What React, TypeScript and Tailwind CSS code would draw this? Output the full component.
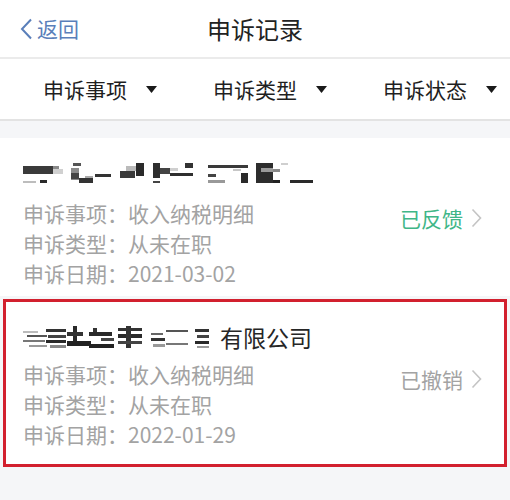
import React from "react";

type Bar = [number, number, number, number, string];

// pixelated (mosaic) names, x/y relative to each svg
const mosaicOne: Bar[] = [
  [0, 5, 30, 8, "#3a3a3a"],
  [30, 5, 6, 3, "#8a8a8a"],
  [30, 8, 10, 5, "#d0d0d0"],
  [0, 20, 13, 2, "#bdbdbd"],
  [17, 19, 7, 3, "#2a2a2a"],
  [50, 2, 8, 3, "#555"],
  [48, 7, 8, 12, "#8a8a8a"],
  [48, 12, 8, 6, "#444"],
  [56, 17, 14, 5, "#333"],
  [62, 15, 8, 2, "#aaa"],
  [72, 13, 16, 3, "#333"],
  [97, 10, 15, 7, "#3a3a3a"],
  [103, 5, 10, 5, "#bbb"],
  [113, 2, 8, 13, "#2a2a2a"],
  [130, 2, 7, 15, "#2e2e2e"],
  [137, 7, 10, 6, "#444"],
  [147, 12, 23, 3, "#2f2f2f"],
  [162, 2, 8, 5, "#333"],
  [147, 7, 8, 3, "#cfcfcf"],
  [130, 20, 7, 2, "#444"],
  [185, 4, 40, 3, "#3a3a3a"],
  [185, 13, 8, 3, "#444"],
  [210, 8, 8, 2, "#c7c7c7"],
  [218, 12, 7, 10, "#2a2a2a"],
  [185, 19, 17, 3, "#999"],
  [233, 2, 17, 20, "#2d2d2d"],
  [238, 7, 12, 4, "#9a9a9a"],
  [250, 8, 7, 3, "#8a8a8a"],
  [250, 19, 7, 3, "#222"],
  [258, 2, 7, 2, "#cfcfcf"],
  [267, 19, 23, 3, "#2a2a2a"],
];

const mosaicTwo: Bar[] = [
  [0, 5, 15, 2, "#bbb"],
  [4, 9, 20, 2, "#555"],
  [0, 14, 22, 2, "#777"],
  [6, 19, 18, 2, "#9a9a9a"],
  [23, 3, 20, 3, "#333"],
  [25, 9, 18, 3, "#444"],
  [23, 14, 20, 3, "#2a2a2a"],
  [27, 19, 16, 3, "#888"],
  [50, 0, 4, 19, "#2a2a2a"],
  [44, 6, 16, 4, "#333"],
  [44, 15, 24, 5, "#222"],
  [70, 2, 4, 8, "#333"],
  [66, 6, 23, 4, "#2a2a2a"],
  [78, 12, 13, 3, "#444"],
  [66, 18, 25, 4, "#222"],
  [95, 2, 24, 3, "#333"],
  [95, 8, 24, 4, "#2a2a2a"],
  [103, 0, 5, 22, "#333"],
  [95, 15, 24, 3, "#444"],
  [128, 7, 12, 2, "#666"],
  [128, 12, 14, 3, "#333"],
  [130, 18, 12, 3, "#999"],
  [143, 4, 22, 2, "#555"],
  [143, 17, 22, 2, "#777"],
  [172, 3, 14, 3, "#333"],
  [174, 9, 12, 3, "#444"],
  [172, 15, 14, 3, "#2a2a2a"],
  [174, 20, 12, 2, "#999"],
];

function Mosaic({ bars, width, height }: { bars: Bar[]; width: number; height: number }) {
  return (
    <svg width={width} height={height} viewBox={`0 0 ${width} ${height}`} className="shrink-0">
      {bars.map(([x, y, w, h, c], i) => (
        <rect key={i} x={x} y={y} width={w} height={h} fill={c} />
      ))}
    </svg>
  );
}

function Caret() {
  return (
    <svg width="11" height="7" viewBox="0 0 11 7">
      <path d="M0 0 L11 0 L5.5 7 Z" fill="#1a1a1a" />
    </svg>
  );
}

function Chevron() {
  return (
    <svg width="11" height="20" viewBox="0 0 11 20" className="ml-[8px]">
      <path d="M1.5 1.5 L9.5 10 L1.5 18.5" fill="none" stroke="#c4c4c4" strokeWidth="1.6" />
    </svg>
  );
}

interface Record {
  item: string;
  type: string;
  date: string;
  status: string;
  done: boolean;
}

function Details({ r }: { r: Record }) {
  return (
    <div className="flex items-start justify-between">
      <div className="text-[21px] leading-[30px] text-[#a3a3a3]">
        <div>申诉事项：{r.item}</div>
        <div>申诉类型：{r.type}</div>
        <div>申诉日期：{r.date}</div>
      </div>
      <div
        className={`mt-[5px] flex items-center text-[21px] leading-[30px] ${
          r.done ? "text-[#3fb687]" : "text-[#a3a3a3]"
        }`}
      >
        {r.status}
        <Chevron />
      </div>
    </div>
  );
}

export default function App() {
  const filters = ["申诉事项", "申诉类型", "申诉状态"];

  return (
    <div
      className="w-[510px] h-[500px] bg-[#f5f6f8] flex flex-col overflow-hidden"
      style={{ fontFamily: '"Noto Sans CJK SC", "Noto Sans", sans-serif' }}
    >
      {/* Header */}
      <div className="h-[57px] bg-white grid grid-cols-[1fr_auto_1fr] items-center shrink-0">
        <div className="flex items-center pl-[20px] text-[#5a7fba]">
          <svg width="13" height="22" viewBox="0 0 13 22">
            <path d="M11 1.5 L2 11 L11 20.5" fill="none" stroke="#5a7fba" strokeWidth="2" />
          </svg>
          <span className="ml-[4px] text-[21px] leading-none">返回</span>
        </div>
        <div className="text-[24px] text-[#222] leading-none">申诉记录</div>
        <div />
      </div>
      <div className="h-[2px] bg-[#ebebeb] shrink-0" />

      {/* Filter bar */}
      <div className="h-[60px] bg-white pl-[43px] grid grid-cols-[170px_170px_170px] items-center shrink-0">
        {filters.map((f) => (
          <div key={f} className="flex items-center gap-[19px]">
            <span className="text-[21px] text-[#1f1f1f] leading-none">{f}</span>
            <Caret />
          </div>
        ))}
      </div>
      <div className="h-[2px] bg-[#e3e3e3] shrink-0" />

      {/* List */}
      <div className="mt-[17px] flex flex-col">
        <div className="bg-white h-[158px] pl-[23px] pr-[28px] pt-[22px]">
          <div className="h-[26px] flex items-center">
            <Mosaic bars={mosaicOne} width={292} height={24} />
          </div>
          <div className="mt-[12px]">
            <Details
              r={{ item: "收入纳税明细", type: "从未在职", date: "2021-03-02", status: "已反馈", done: true }}
            />
          </div>
        </div>

        <div className="mt-[3px] mx-[3px] bg-white border-[3px] border-[#d2202e] h-[168px] pl-[17px] pr-[22px] pt-[20px]">
          <div className="h-[30px] flex items-center">
            <Mosaic bars={mosaicTwo} width={187} height={23} />
            <span className="ml-[10px] text-[23px] text-[#262626] leading-none">有限公司</span>
          </div>
          <div className="mt-[7px]">
            <Details
              r={{ item: "收入纳税明细", type: "从未在职", date: "2022-01-29", status: "已撤销", done: false }}
            />
          </div>
        </div>
      </div>
    </div>
  );
}
